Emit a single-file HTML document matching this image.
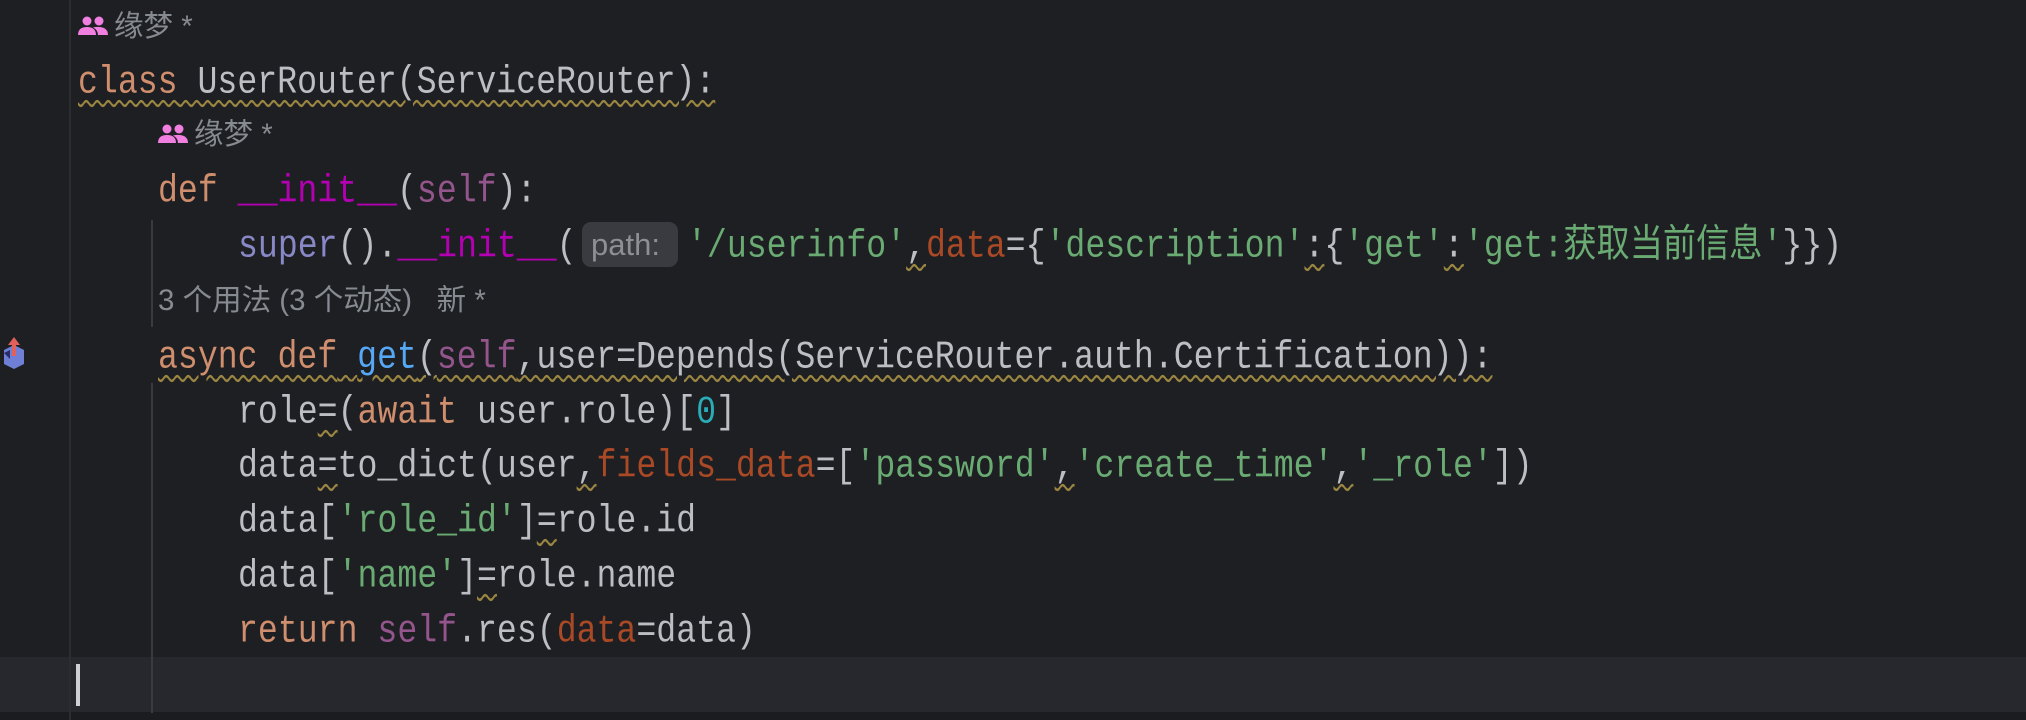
<!DOCTYPE html>
<html><head><meta charset="utf-8"><style>
body{margin:0;width:2026px;height:720px;background:#1e1f22;overflow:hidden;position:relative;font-family:"Liberation Mono","Noto Sans CJK SC",monospace;}
.l{position:absolute;height:55px;line-height:55px;font-size:33.2px;color:#bcbec4;white-space:pre;transform:translateY(3px) scaleY(1.16);transform-origin:0 60%;}
.h{position:absolute;height:55px;line-height:55px;font-size:29.5px;color:#868a91;white-space:pre;font-family:"Liberation Sans","Noto Sans CJK SC",sans-serif;}
.k{color:#cf8e6d}.s{color:#6aab73}.sf{color:#94558d}.d{color:#b200b2}.sp{color:#8888c6}.p{color:#aa4926}.n{color:#2aacb8}.f{color:#56a8f5}
.w{text-decoration:underline wavy #9c8742;text-decoration-thickness:1.5px;text-underline-offset:6px;}
</style></head><body>
<div style="position:absolute;left:0;top:657px;width:2026px;height:55px;background:#26282e"></div>
<div style="position:absolute;left:0;top:712px;width:2026px;height:8px;background:#1b1c1f"></div>
<div style="position:absolute;left:69px;top:0;width:2px;height:720px;background:#2b2d30"></div>
<div style="position:absolute;left:151px;top:220px;width:2px;height:107px;background:#393b40"></div>
<div style="position:absolute;left:151px;top:383px;width:2px;height:330px;background:#393b40"></div>
<div style="position:absolute;left:76px;top:664px;width:4px;height:42px;background:#ced0d6"></div>
<svg style="position:absolute;left:2px;top:336px" width="24" height="34" viewBox="0 0 24 34"><path d="M2 14 L12 9 L22 14 L22 28 L12 33 L2 28Z" fill="#6f7fd6"/><path d="M12 1 L6 9 H10 V20 H14 V9 H18Z" fill="#e0605a"/><path d="M2 17 L8 14 V23 Z" fill="#2b2d6a"/></svg>

<svg style="position:absolute;left:78px;top:15px" width="30" height="22" viewBox="0 0 30 22"><circle cx="9" cy="6" r="4.5" fill="#f07fe0"/><circle cx="21" cy="6" r="4.5" fill="#f07fe0"/><path d="M0 20 Q0 12 9 12 Q18 12 18 20Z" fill="#f07fe0"/><path d="M15 12.5 Q21 11 26 13 Q30 15 30 20 H20 Q20 15 15 12.5Z" fill="#f07fe0"/></svg>
<div class="h" style="left:114px;top:-1px">缘梦 *</div>
<div class="l" style="left:78px;top:53px"><span class="w"><span class="k">class</span> UserRouter(ServiceRouter):</span></div>
<svg style="position:absolute;left:158px;top:123px" width="30" height="22" viewBox="0 0 30 22"><circle cx="9" cy="6" r="4.5" fill="#f07fe0"/><circle cx="21" cy="6" r="4.5" fill="#f07fe0"/><path d="M0 20 Q0 12 9 12 Q18 12 18 20Z" fill="#f07fe0"/><path d="M15 12.5 Q21 11 26 13 Q30 15 30 20 H20 Q20 15 15 12.5Z" fill="#f07fe0"/></svg>
<div class="h" style="left:194px;top:107px">缘梦 *</div>
<div class="l" style="left:158px;top:162px"><span class="k">def</span> <span class="d">__init__</span>(<span class="sf">self</span>):</div>
<div style="position:absolute;left:582px;top:222px;width:96px;height:45px;background:#393b40;border-radius:9px"></div>
<div class="h" style="left:591px;top:217px;color:#8c8f94;font-size:31px">path:</div>
<div class="l" style="left:238px;top:217px"><span class="sp">super</span>().<span class="d">__init__</span>(</div>
<div class="l" style="left:687px;top:217px"><span class="s">'/userinfo'</span><span class="w">,</span><span class="p">data</span>={<span class="s">'description'</span><span class="w">:</span>{<span class="s">'get'</span><span class="w">:</span><span class="s">'get:获取当前信息'</span>}})</div>
<div class="h" style="left:158px;top:273px">3 个用法 (3 个动态)   新 *</div>
<div class="l" style="left:158px;top:328px"><span class="w"><span class="k">async def</span> <span class="f">get</span>(<span class="sf">self</span>,user=Depends(ServiceRouter.auth.Certification)):</span></div>
<div class="l" style="left:238px;top:383px">role<span class="w">=</span>(<span class="k">await</span> user.role)[<span class="n">0</span>]</div>
<div class="l" style="left:238px;top:437px">data<span class="w">=</span>to_dict(user<span class="w">,</span><span class="p">fields_data</span>=[<span class="s">'password'</span><span class="w">,</span><span class="s">'create_time'</span><span class="w">,</span><span class="s">'_role'</span>])</div>
<div class="l" style="left:238px;top:492px">data[<span class="s">'role_id'</span>]<span class="w">=</span>role.id</div>
<div class="l" style="left:238px;top:547px">data[<span class="s">'name'</span>]<span class="w">=</span>role.name</div>
<div class="l" style="left:238px;top:602px"><span class="k">return</span> <span class="sf">self</span>.res(<span class="p">data</span>=data)</div>
</body></html>
